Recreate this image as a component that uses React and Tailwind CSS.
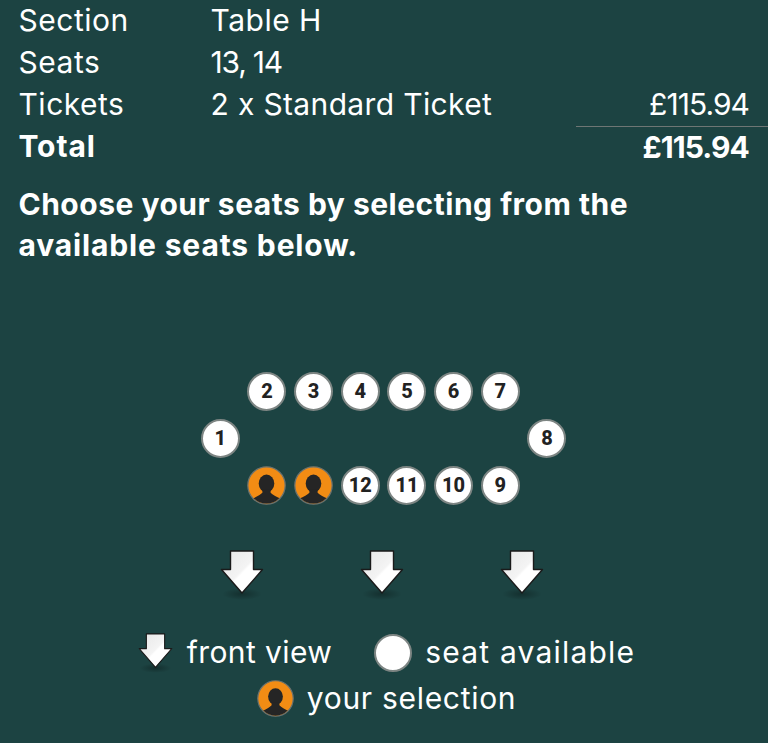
const font = "[font-family:'Inter','Liberation_Sans',sans-serif]";

function Person({ id }) {
  return (
    <svg viewBox="0 0 38 38" className="w-full h-full block">
      <circle cx="19" cy="19" r="18.2" fill="#f28c14" stroke="#6a726f" strokeWidth="1.2" />
      <clipPath id={id}><circle cx="19" cy="19" r="17.6" /></clipPath>
      <g clipPath={`url(#${id})`} fill="#252525">
        <ellipse cx="19" cy="17" rx="7.6" ry="8.6" />
        <path d="M15 23 L15 26 Q12 29 5 32 L5 38 L33 38 L33 32 Q26 29 23 26 L23 23 Z" />
      </g>
    </svg>
  );
}

function Seat({ n, col, row, sel }) {
  return (
    <div
      className="w-[39px] h-[39px] justify-self-center self-center"
      style={{ gridColumnStart: col, gridRowStart: row }}
    >
      {sel ? (
        <Person id={`p${col}`} />
      ) : (
        <div className="w-full h-full rounded-full bg-white border-2 border-[#7d8583] flex items-center justify-center text-[#222] text-[20px] tracking-normal font-extrabold font-['Roboto',sans-serif]">
          {n}
        </div>
      )}
    </div>
  );
}

function Arrow({ w = 44, h = 50, id }) {
  return (
    <svg width={w} height={h} viewBox="0 0 44 50" className="block overflow-visible">
      <defs>
        <linearGradient id={`g${id}`} x1="0" y1="0" x2="1" y2="1">
          <stop offset="0" stopColor="#e6e6e6" />
          <stop offset="0.48" stopColor="#f4f4f4" />
          <stop offset="0.52" stopColor="#ffffff" />
          <stop offset="1" stopColor="#ffffff" />
        </linearGradient>
        <radialGradient id={`s${id}`}>
          <stop offset="0" stopColor="#000" stopOpacity="0.3" />
          <stop offset="1" stopColor="#000" stopOpacity="0" />
        </radialGradient>
      </defs>
      <ellipse cx="22" cy="44" rx="20" ry="6" fill={`url(#s${id})`} />
      <path d="M10.5 1 H33.5 V19.5 H42.5 L22 43 L1.5 19.5 H10.5 Z" fill={`url(#g${id})`} stroke="#1a1a1a" strokeWidth="1.4" strokeLinejoin="round" />
    </svg>
  );
}

function Row({ a, b, c, bold, aClass = "", bClass = "", cClass = "" }) {
  return (
    <div className={`flex h-[41.7px] items-center ${bold ? "font-bold" : ""}`}>
      <div className={`w-[192px] ${aClass}`}>{a}</div>
      <div className={`flex-1 ${bClass}`}>{b}</div>
      {c && <div className={cClass}>{c}</div>}
    </div>
  );
}

export default function App() {
  return (
    <div className={`w-[768px] h-[743px] overflow-hidden bg-[#1c4342] text-white text-[30px] tracking-[0.5px] ${font}`}>
      <div className="pl-[18.5px] pr-[19px] relative">
        <Row a="Section" b="Table H" />
        <Row a="Seats" b="13, 14" bClass="tracking-[-1.2px]" />
        <div className="relative">
          <Row a="Tickets" b="2 x Standard Ticket" c="£115.94" bClass="tracking-[0.35px]" cClass="tracking-[-0.95px]" />
          <div className="absolute right-[-19px] bottom-[-2px] w-[192px] h-px bg-[#6e7674]" />
        </div>
        <div className="pt-px">
          <Row a="Total" c="£115.94" bold aClass="tracking-[0.9px]" cClass="tracking-[-0.9px] pt-[2px]" />
        </div>
        <p className="mt-[16px] font-bold leading-[41px]">
          <span className="tracking-[0.5px]">Choose your seats by selecting from the</span><br />
          <span className="tracking-[0.85px]">available seats below.</span>
        </p>
      </div>

      <div className="mt-[102px] ml-[197px] grid grid-cols-[repeat(8,46.67px)] grid-rows-[repeat(3,47px)]">
        {[2, 3, 4, 5, 6, 7].map((n, i) => <Seat key={n} n={n} col={i + 2} row={1} />)}
        <Seat n={1} col={1} row={2} />
        <Seat n={8} col={8} row={2} />
        <Seat sel col={2} row={3} />
        <Seat sel col={3} row={3} />
        {[12, 11, 10, 9].map((n, i) => <Seat key={n} n={n} col={i + 4} row={3} />)}
      </div>

      <div className="mt-[41px] ml-[220px] flex gap-[96px]">
        <Arrow id="a" /><Arrow id="b" /><Arrow id="c" />
      </div>

      <div className="mt-[30px] pl-[5px] flex items-center justify-center h-[46px]">
        <Arrow w={35} h={40} id="d" />
        <span className="ml-[14px] tracking-[0.4px]">front view</span>
        <div className="ml-[42px] w-[38px] h-[38px] rounded-full bg-white border-2 border-[#7d8583]" />
        <span className="ml-[13px] tracking-[1.2px]">seat available</span>
      </div>
      <div className="pl-[5px] flex items-center justify-center h-[46px]">
        <div className="w-[37px] h-[37px]"><Person id="legend" /></div>
        <span className="ml-[13px] tracking-[0.7px]">your selection</span>
      </div>
    </div>
  );
}
